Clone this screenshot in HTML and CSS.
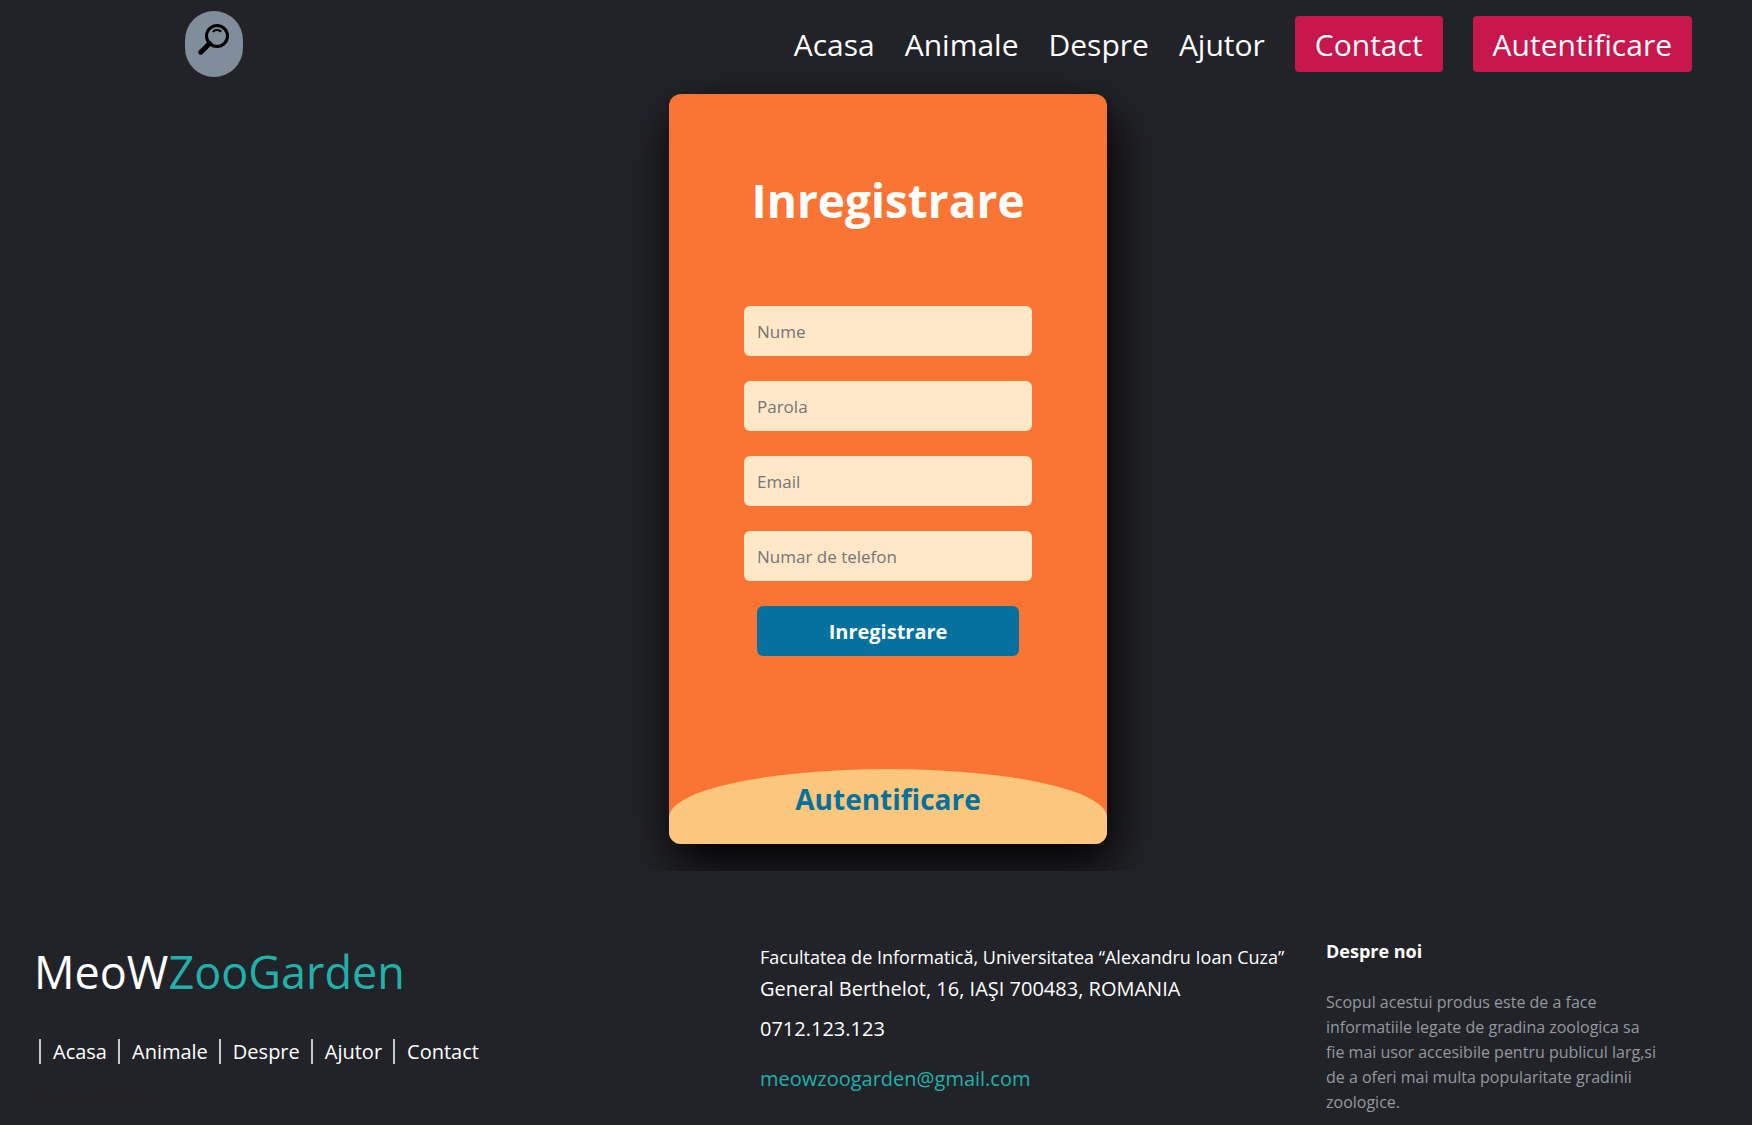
FILE: index.html
```html
<!DOCTYPE html>
<html lang="en">
<head>
  <meta charset="utf-8">
  <meta name="viewport" content="width=device-width, initial-scale=1">
  <title>MeoW ZooGarden - Inregistrare</title>
  <link rel="stylesheet" href="styles.css">
</head>
<body>
  <header class="topbar">
    <button class="search" type="button" aria-label="Cauta">
      <svg class="search-icon" viewBox="0 0 32 32" aria-hidden="true">
        <circle cx="19" cy="13" r="10.5" fill="none" stroke="#000" stroke-width="3"/>
        <path d="M15.500 8.200Q19 6 22.500 8.200" fill="none" stroke="#000" stroke-width="2" stroke-linecap="round"/>
        <path d="M11.500 20.500L2.800 29.200" fill="none" stroke="#000" stroke-width="5" stroke-linecap="round"/>
      </svg>
    </button>
    <nav class="menu">
      <a class="menu-link" href="#">Acasa</a>
      <a class="menu-link" href="#">Animale</a>
      <a class="menu-link" href="#">Despre</a>
      <a class="menu-link" href="#">Ajutor</a>
      <a class="menu-link menu-button" href="#">Contact</a>
      <a class="menu-link menu-button" href="#">Autentificare</a>
    </nav>
  </header>

  <main class="content">
    <section class="card">
      <form class="signup">
        <h1 class="signup-title">Inregistrare</h1>
        <input class="field" type="text" name="nume" placeholder="Nume" aria-label="Nume">
        <input class="field" type="password" name="parola" placeholder="Parola" aria-label="Parola">
        <input class="field" type="email" name="email" placeholder="Email" aria-label="Email">
        <input class="field" type="tel" name="telefon" placeholder="Numar de telefon" aria-label="Numar de telefon">
        <button class="submit" type="submit">Inregistrare</button>
      </form>
      <button class="login-tab" type="button">Autentificare</button>
    </section>
  </main>

  <footer class="footer">
    <div class="footer-left">
      <p class="logo">MeoW<span class="accent">ZooGarden</span></p>
      <nav class="footer-links">
        <a class="footer-link" href="#">Acasa</a>
        <a class="footer-link" href="#">Animale</a>
        <a class="footer-link" href="#">Despre</a>
        <a class="footer-link" href="#">Ajutor</a>
        <a class="footer-link" href="#">Contact</a>
      </nav>
      <p class="copyright">MeoW © 2022</p>
    </div>
    <div class="footer-center">
      <p class="address"><span class="faculty">Facultatea de Informatică, Universitatea “Alexandru Ioan Cuza”</span> General Berthelot, 16, IAŞI 700483, ROMANIA</p>
      <p class="phone">0712.123.123</p>
      <p class="mail"><a class="accent" href="mailto:meowzoogarden@gmail.com">meowzoogarden@gmail.com</a></p>
    </div>
    <div class="footer-right">
      <h2 class="about-title">Despre noi</h2>
      <p class="about">Scopul acestui produs este de a face informatiile legate de gradina zoologica sa fie mai usor accesibile pentru publicul larg,si de a oferi mai multa popularitate gradinii zoologice.</p>
    </div>
  </footer>
</body>
</html>
```
FILE: styles.css
```css
* {
  box-sizing: border-box;
  margin: 0;
  padding: 0;
}

body {
  background: #222328;
  color: #fff;
  font-family: "Open Sans", sans-serif;
  overflow-x: hidden;
}

a {
  color: inherit;
  text-decoration: none;
}

button,
input {
  border: 0;
  font-family: inherit;
}

.topbar {
  display: flex;
  align-items: flex-start;
  justify-content: space-between;
  padding: 11px 60px 0 185px;
}

.search {
  width: 58px;
  height: 66px;
  padding: 12px 13px 22px;
  border-radius: 29px;
  background: #808e9b;
}

.search-icon {
  display: block;
  width: 32px;
  height: 32px;
}

.menu {
  display: flex;
  align-items: center;
  gap: 30px;
  padding-top: 5px;
}

.menu-link {
  padding-top: 2px;
  font-size: 30px;
  line-height: 54px;
}

.menu-button {
  padding: 2px 20px 0;
  border-radius: 4px;
  background: #c7174c;
}

.content {
  display: flex;
  justify-content: center;
  padding: 17px 0 27px 24px;
}

.card {
  display: flex;
  flex-direction: column;
  justify-content: space-between;
  width: 438px;
  min-height: 750px;
  border-radius: 12px;
  overflow: hidden;
  background: #fa7433;
  box-shadow: 5px 20px 50px #000;
}

.signup {
  display: flex;
  flex-direction: column;
  align-items: center;
  gap: 25px;
  padding-top: 75px;
}

.signup-title {
  margin-bottom: 50px;
  font-size: 46px;
  line-height: 62px;
}

.field {
  width: 288px;
  height: 50px;
  padding: 0 13px;
  border-radius: 6px;
  background: #ffe8c8;
  font-size: 17px;
}

.field::placeholder {
  color: #757575;
}

.submit {
  width: 262px;
  height: 50px;
  border-radius: 6px;
  background: #06719e;
  color: #fff;
  font-size: 20px;
  font-weight: 700;
}

.login-tab {
  height: 75px;
  padding-bottom: 15px;
  border-radius: 50% 50% 0 0 / 48px 48px 0 0;
  background: #fac77c;
  color: #06719e;
  font-size: 28px;
  font-weight: 700;
}

.footer {
  position: relative;
  display: grid;
  grid-template-columns: 726px minmax(0, 1fr) 346px;
  padding: 64px 80px 0 34px;
  background: #222328;
  font-size: 20px;
}

.accent {
  color: #20b2aa;
}

.logo {
  padding-top: 6px;
  font-size: 45px;
  line-height: 62px;
}

.footer-links {
  display: flex;
  gap: 11px;
  margin-top: 36px;
  padding-left: 5px;
  line-height: 25px;
}

.footer-link {
  padding-left: 12px;
  border-left: 2px solid #c8c8c8;
}

.copyright {
  margin-top: 19px;
  color: #222;
  font-size: 18px;
  line-height: 30px;
}

.address {
  padding-top: 7px;
  line-height: 32px;
}

.faculty {
  display: block;
  font-size: 18px;
  line-height: 31px;
}

.phone {
  margin-top: 8px;
  line-height: 32px;
}

.mail {
  margin-top: 18px;
  line-height: 32px;
}

.about-title {
  font-size: 18px;
  line-height: 32px;
}

.about {
  max-width: 335px;
  margin-top: 23px;
  color: #92999f;
  font-size: 16px;
  line-height: 25px;
}
```
